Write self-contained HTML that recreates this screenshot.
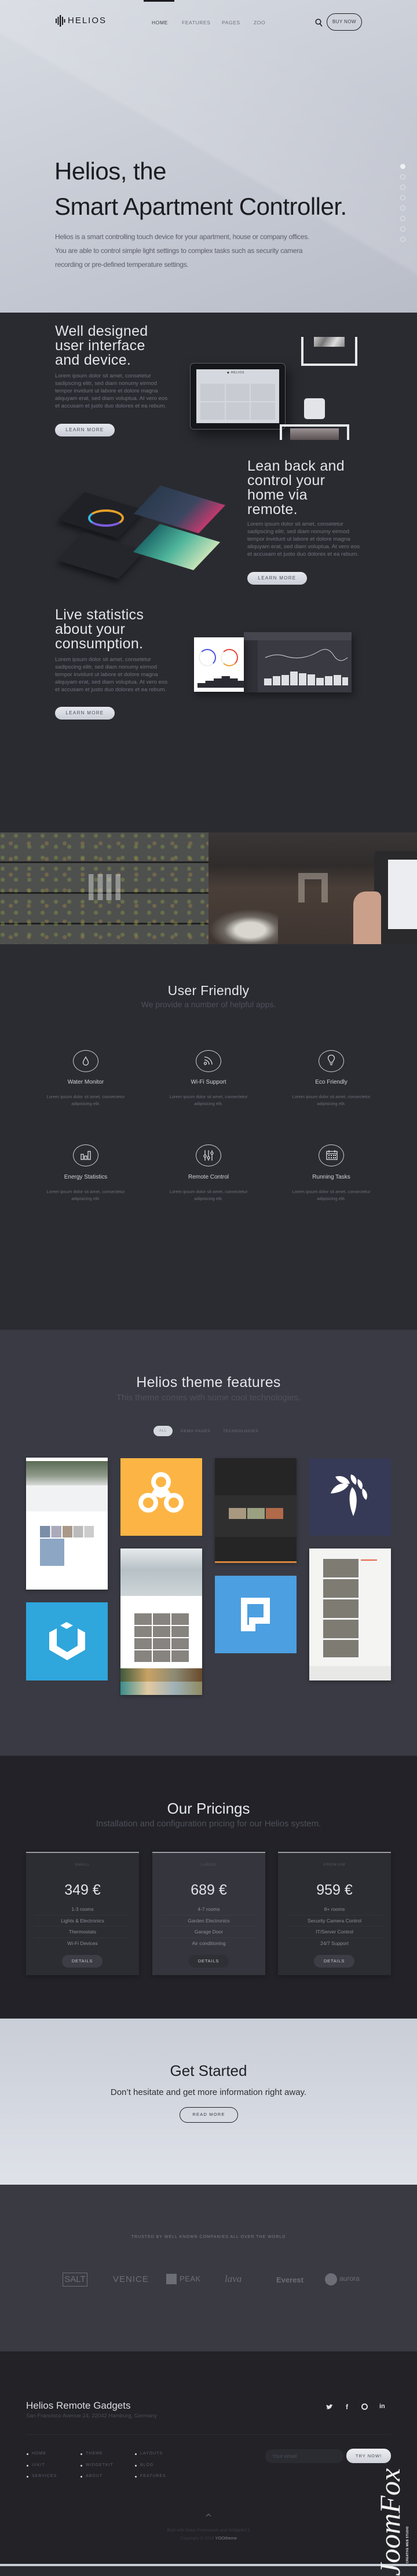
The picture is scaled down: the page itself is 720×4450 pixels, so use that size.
<!DOCTYPE html>
<html><head><meta charset="utf-8">
<style>
*{margin:0;padding:0;box-sizing:border-box}
body{width:720px;height:4433px;font-family:"Liberation Sans",sans-serif;background:#2a2b31;position:relative;overflow:hidden}
.a{position:absolute}
.c{text-align:center}
.t{font-weight:300}
.lm{position:absolute;width:103px;height:22px;border-radius:11px;background:linear-gradient(#e6e8ee,#c9cdd6);color:#4a4d57;font-size:8px;letter-spacing:1.3px;text-align:center;line-height:22px}
.h2{color:#e4e5ea;font-size:25px;line-height:25px;letter-spacing:.3px}
.p{color:#6f717b;font-size:9.6px;line-height:13px}
.ic{position:absolute;width:44px;height:38px;border:1.3px solid #cfd0d5;border-radius:50%}
.ft{position:absolute;width:200px;text-align:center;color:#d2d3d8;font-size:10px}
.fd{position:absolute;width:200px;text-align:center;color:#6a6c76;font-size:7.6px;line-height:11.5px}
.card{position:absolute;top:3199px;width:195px;height:213px;background:#2c2d33;border-top:2px solid #9a9ca4;box-shadow:0 2px 8px rgba(0,0,0,.3)}
.card .l{position:absolute;top:17px;width:100%;text-align:center;font-size:6.5px;letter-spacing:1px;color:#555761}
.card .pr{position:absolute;top:50px;width:100%;text-align:center;font-size:25px;color:#e2e3e8}
.card .r{position:absolute;left:16px;right:16px;height:19.5px;text-align:center;font-size:8.5px;color:#8a8c95;border-bottom:1px solid #34353b;line-height:19px}
.card .b{position:absolute;left:62px;top:176px;width:70px;height:22px;border-radius:11px;background:#3d3e45;color:#c9cad0;font-size:7.5px;letter-spacing:.8px;text-align:center;line-height:22px}
.fl{position:absolute;font-size:7px;letter-spacing:1px;color:#5b5d66}
.fl:before{content:"";position:absolute;left:-9px;top:3px;width:3px;height:3px;border-radius:50%;background:#d8d9de}
</style></head><body>

<!-- HERO -->
<div class="a" style="left:0;top:0;width:720px;height:540px;background:linear-gradient(160deg,#d7dbe2 0%,#c9cdd6 45%,#b9bdc8 100%)"></div>
<div class="a" style="left:0;top:0;width:720px;height:540px;background:linear-gradient(30deg,rgba(255,255,255,0) 50%,rgba(255,255,255,.12) 51%,rgba(255,255,255,0) 80%)"></div>
<div class="a" style="left:248px;top:0;width:53px;height:3px;background:#1b1c20"></div>
<svg class="a" style="left:96px;top:26px" width="17" height="20" viewBox="0 0 17 20"><g fill="#1b1c20"><rect x="0" y="6" width="2" height="8"/><rect x="3.5" y="3" width="2" height="14"/><rect x="7" y="0" width="2.4" height="20"/><rect x="11" y="3" width="2" height="14"/><rect x="14.5" y="7" width="2" height="6"/></g></svg>
<div class="a" style="left:117px;top:27px;font-size:15px;letter-spacing:2px;color:#1b1c20">HELIOS</div>
<div class="a" style="left:262px;top:34px;font-size:8.5px;letter-spacing:.6px;color:#3a3c44">HOME</div>
<div class="a" style="left:314px;top:34px;font-size:8.5px;letter-spacing:.6px;color:#6d707a">FEATURES</div>
<div class="a" style="left:383px;top:34px;font-size:8.5px;letter-spacing:.6px;color:#6d707a">PAGES</div>
<div class="a" style="left:438px;top:34px;font-size:8.5px;letter-spacing:.6px;color:#6d707a">ZOO</div>
<svg class="a" style="left:544px;top:32px" width="13" height="15" viewBox="0 0 13 15"><circle cx="5.5" cy="5.5" r="4.3" fill="none" stroke="#1b1c20" stroke-width="1.5"/><path d="M8.5 9l3.5 4.5" stroke="#1b1c20" stroke-width="1.6"/></svg>
<div class="a" style="left:564px;top:23px;width:61px;height:30px;border:1.5px solid #1b1c20;border-radius:15px;font-size:8px;color:#3a3c44;text-align:center;line-height:27px;letter-spacing:.4px">BUY NOW</div>
<div class="a t" style="left:94px;top:265px;font-size:42px;line-height:61px;color:#1c1d22;letter-spacing:-.5px">Helios, the<br>Smart Apartment Controller.</div>
<div class="a" style="left:95px;top:397px;width:460px;font-size:12px;line-height:24px;color:#5b5e68;letter-spacing:-.3px">Helios is a smart controlling touch device for your apartment, house or company offices. You are able to control simple light settings to complex tasks such as security camera recording or pre-defined temperature settings.</div>
<div class="a" style="left:691px;top:283px;width:9px;height:9px;border-radius:50%;background:#eef0f4"></div>
<div class="a" style="left:691px;top:301px">
<div style="width:9px;height:9px;border-radius:50%;border:1px solid #e2e5ea;margin-bottom:9px"></div><div style="width:9px;height:9px;border-radius:50%;border:1px solid #e2e5ea;margin-bottom:9px"></div><div style="width:9px;height:9px;border-radius:50%;border:1px solid #e2e5ea;margin-bottom:9px"></div><div style="width:9px;height:9px;border-radius:50%;border:1px solid #e2e5ea;margin-bottom:9px"></div><div style="width:9px;height:9px;border-radius:50%;border:1px solid #e2e5ea;margin-bottom:9px"></div><div style="width:9px;height:9px;border-radius:50%;border:1px solid #e2e5ea;margin-bottom:9px"></div><div style="width:9px;height:9px;border-radius:50%;border:1px solid #e2e5ea"></div></div>
<svg class="a" style="left:355px;top:634px" width="10" height="7" viewBox="0 0 10 7"><path d="M1 1l4 4 4-4" fill="none" stroke="#1b1c20" stroke-width="1.3"/></svg>

<!-- DARK FEATURES -->
<div class="a" style="left:0;top:540px;width:720px;height:898px;background:#2a2b31"></div>
<div class="a t h2" style="left:95px;top:560px">Well designed<br>user interface<br>and device.</div>
<div class="a p" style="left:95px;top:643px;width:200px">Lorem ipsum dolor sit amet, consetetur sadipscing elitr, sed diam nonumy eirmod tempor invidunt ut labore et dolore magna aliquyam erat, sed diam voluptua. At vero eos et accusam et justo duo dolores et ea rebum.</div>
<div class="lm" style="left:95px;top:732px">LEARN MORE</div>
<div class="a" style="left:328px;top:627px;width:165px;height:115px;border-radius:7px;background:#16171b;border:1px solid #5c5e66;box-shadow:6px 10px 20px rgba(0,0,0,.5)"></div>
<div class="a" style="left:339px;top:638px;width:143px;height:93px;background:#d5d8de"></div>
<div class="a" style="left:392px;top:641px;font-size:5px;letter-spacing:.8px;color:#333">◆ HELIOS</div>
<div class="a" style="left:346px;top:663px;width:129px;height:62px;display:grid;grid-template-columns:repeat(3,1fr);gap:2px">
<div style="background:#c8cbd2"></div><div style="background:#c8cbd2"></div><div style="background:#c8cbd2"></div><div style="background:#c8cbd2"></div><div style="background:#c8cbd2"></div><div style="background:#c8cbd2"></div></div>
<div class="a" style="left:520px;top:582px;width:97px;height:50px;border:4px solid #e8e9ec;border-top:none"></div>
<div class="a" style="left:542px;top:582px;width:53px;height:17px;background:linear-gradient(120deg,#ccc,#777,#ddd,#888)"></div>
<div class="a" style="left:525px;top:688px;width:36px;height:36px;border-radius:5px;background:#e3e4e8"></div>
<div class="a" style="left:483px;top:733px;width:120px;height:27px;border:4px solid #e8e9ec;border-bottom:none"></div>
<div class="a" style="left:501px;top:740px;width:84px;height:20px;background:linear-gradient(#9b9194,#5a5152)"></div>

<div class="a t h2" style="left:427px;top:793px">Lean back and<br>control your<br>home via<br>remote.</div>
<div class="a p" style="left:427px;top:899px;width:200px">Lorem ipsum dolor sit amet, consetetur sadipscing elitr, sed diam nonumy eirmod tempor invidunt ut labore et dolore magna aliquyam erat, sed diam voluptua. At vero eos et accusam et justo duo dolores et ea rebum.</div>
<div class="lm" style="left:427px;top:988px">LEARN MORE</div>
<div class="a" style="left:110px;top:865px;width:130px;height:50px;background:#202126;transform:skewX(-35deg) rotate(14deg);box-shadow:4px 6px 10px rgba(0,0,0,.5)"></div>
<div class="a" style="left:152px;top:880px;width:62px;height:30px;border-radius:50%;border:4px solid #e6a02a;border-left-color:#38b7e0;border-bottom-color:#7c5de0"></div>
<div class="a" style="left:240px;top:855px;width:140px;height:50px;background:linear-gradient(90deg,#2b3b4e,#3b4660 60%,#c03a6e);transform:skewX(-35deg) rotate(14deg)"></div>
<div class="a" style="left:110px;top:935px;width:130px;height:50px;background:#25262b;transform:skewX(-35deg) rotate(14deg);box-shadow:4px 6px 10px rgba(0,0,0,.5)"></div>
<div class="a" style="left:240px;top:920px;width:130px;height:50px;background:linear-gradient(90deg,#1f6b6b,#4fb59b,#c6e3b8);transform:skewX(-35deg) rotate(14deg)"></div>

<div class="a t h2" style="left:95px;top:1050px">Live statistics<br>about your<br>consumption.</div>
<div class="a p" style="left:95px;top:1133px;width:200px">Lorem ipsum dolor sit amet, consetetur sadipscing elitr, sed diam nonumy eirmod tempor invidunt ut labore et dolore magna aliquyam erat, sed diam voluptua. At vero eos et accusam et justo duo dolores et ea rebum.</div>
<div class="lm" style="left:95px;top:1221px">LEARN MORE</div>
<div class="a" style="left:421px;top:1092px;width:186px;height:104px;background:#393a42;box-shadow:4px 6px 12px rgba(0,0,0,.4)"></div>
<div class="a" style="left:421px;top:1092px;width:186px;height:14px;background:#45464e"></div>
<div class="a" style="left:421px;top:1106px;width:24px;height:90px;background:#303138"></div>
<svg class="a" style="left:456px;top:1120px" width="145" height="70" viewBox="0 0 145 70"><path d="M2 16 Q20 8 35 13 T65 16 T95 5 T120 12 T144 16" fill="none" stroke="#d9dade" stroke-width="1"/><g fill="#dfe0e4"><rect x="0" y="52" width="13" height="12"/><rect x="15" y="48" width="13" height="16"/><rect x="30" y="46" width="13" height="18"/><rect x="45" y="40" width="13" height="24"/><rect x="60" y="43" width="13" height="21"/><rect x="75" y="45" width="13" height="19"/><rect x="90" y="51" width="13" height="13"/><rect x="105" y="48" width="13" height="16"/><rect x="120" y="46" width="13" height="18"/><rect x="135" y="50" width="10" height="14"/></g></svg>
<div class="a" style="left:335px;top:1101px;width:86px;height:94px;background:#fff;box-shadow:4px 6px 12px rgba(0,0,0,.4)"></div>
<div class="a" style="left:343px;top:1121px;width:30px;height:30px;border-radius:50%;border:2px solid #eee;border-right-color:#4a55e0;border-top-color:#4a55e0"></div>
<div class="a" style="left:381px;top:1121px;width:30px;height:30px;border-radius:50%;border:2px solid #eee;border-right-color:#e5473a;border-top-color:#e5473a;border-bottom-color:#f0a03a"></div>
<div class="a" style="left:341px;top:1168px;width:80px;height:20px;background:#2b2c33;clip-path:polygon(0 60%,17% 60%,17% 40%,35% 40%,35% 20%,52% 20%,52% 0,70% 0,70% 20%,87% 20%,87% 40%,100% 40%,100% 100%,0 100%)"></div>

<!-- IMAGE ROW -->
<div class="a" style="left:0;top:1438px;width:360px;height:193px;background:repeating-linear-gradient(180deg,#4e504e 0 50px,#1f201f 50px 53px),#4e504e"></div>
<div class="a" style="left:0;top:1438px;width:360px;height:193px;background:radial-gradient(circle at 20% 30%,rgba(140,160,70,.45) 0 3px,transparent 4px) 0 0/23px 19px,radial-gradient(circle at 60% 70%,rgba(190,150,70,.35) 0 3px,transparent 4px) 0 0/31px 27px;opacity:.9"></div>
<div class="a" style="left:153px;top:1510px;width:58px;height:45px;background:linear-gradient(90deg,rgba(230,230,230,.45) 0 15%,transparent 15% 27%,rgba(230,230,230,.45) 27% 42%,transparent 42% 53%,rgba(230,230,230,.45) 53% 68%,transparent 68% 80%,rgba(230,230,230,.45) 80% 95%,transparent 95%)"></div>
<div class="a" style="left:360px;top:1438px;width:360px;height:193px;background:linear-gradient(180deg,#3a3636 0%,#302c2b 30%,#4a3f38 50%,#3e3430 100%)"></div>
<div class="a" style="left:360px;top:1570px;width:120px;height:61px;background:radial-gradient(ellipse at 60% 60%,#d9d6d0 0 25%,#6c6660 45%,transparent 70%)"></div>
<div class="a" style="left:515px;top:1508px;width:51px;height:51px;border:11px solid rgba(200,190,180,.45);border-bottom:none"></div>
<div class="a" style="left:646px;top:1470px;width:80px;height:161px;background:#2a2a2c;border-radius:8px"></div>
<div class="a" style="left:670px;top:1485px;width:50px;height:120px;background:#ecedf0"></div>
<div class="a" style="left:610px;top:1540px;width:48px;height:91px;background:#caa08a;border-radius:22px 10px 0 0"></div>

<!-- USER FRIENDLY -->
<div class="a" style="left:0;top:1631px;width:720px;height:666px;background:#2b2c32"></div>
<div class="a c t" style="left:0;top:1698px;width:720px;font-size:23px;color:#e4e5ea;letter-spacing:.3px">User Friendly</div>
<div class="a c" style="left:0;top:1727px;width:720px;font-size:14px;color:#4e505a">We provide a number of helpful apps.</div>
<div class="ic" style="left:126px;top:1814px"></div>
<div class="ic" style="left:338px;top:1814px"></div>
<div class="ic" style="left:550px;top:1814px"></div>
<div class="ic" style="left:126px;top:1977px"></div>
<div class="ic" style="left:338px;top:1977px"></div>
<div class="ic" style="left:550px;top:1977px"></div>
<svg class="a" style="left:142px;top:1823px" width="12" height="20" viewBox="0 0 12 20"><path d="M6 3 C4 7 1.5 9.5 1.5 12.5 A4.5 4.5 0 0 0 10.5 12.5 C10.5 9.5 8 7 6 3Z" fill="none" stroke="#dcdde1" stroke-width="1.3"/></svg>
<svg class="a" style="left:350px;top:1822px" width="20" height="20" viewBox="0 0 20 20"><g fill="none" stroke="#dcdde1" stroke-width="1.3"><circle cx="4.5" cy="15" r="2"/><path d="M3 9 A8 8 0 0 1 11 17"/><path d="M3 4 A13 13 0 0 1 16 17"/></g></svg>
<svg class="a" style="left:565px;top:1822px" width="14" height="20" viewBox="0 0 14 20"><g fill="none" stroke="#dcdde1" stroke-width="1.3"><path d="M4.5 13 C4.5 10 1.5 9 1.5 6 A5.5 5.5 0 0 1 12.5 6 C12.5 9 9.5 10 9.5 13Z"/><path d="M4.5 15.5h5M5.5 17.5h3"/></g></svg>
<svg class="a" style="left:139px;top:1987px" width="18" height="18" viewBox="0 0 18 18"><g fill="none" stroke="#dcdde1" stroke-width="1.3"><rect x="1" y="7" width="4" height="9"/><rect x="7" y="10" width="4" height="6"/><rect x="13" y="2" width="4" height="14"/></g></svg>
<svg class="a" style="left:351px;top:1986px" width="18" height="20" viewBox="0 0 18 20"><g fill="none" stroke="#dcdde1" stroke-width="1.3"><path d="M3 1v18M9 1v18M15 1v18"/><circle cx="3" cy="11" r="2" fill="#2b2c32"/><circle cx="9" cy="14" r="2" fill="#2b2c32"/><circle cx="15" cy="6" r="2" fill="#2b2c32"/></g></svg>
<svg class="a" style="left:563px;top:1986px" width="20" height="18" viewBox="0 0 20 18"><g fill="none" stroke="#dcdde1" stroke-width="1.3"><rect x="1" y="3" width="18" height="14"/><path d="M5 1v4M15 1v4M1 7h18"/></g><g fill="#dcdde1"><rect x="4" y="9" width="2" height="2"/><rect x="8" y="9" width="2" height="2"/><rect x="12" y="9" width="2" height="2"/><rect x="15" y="9" width="2" height="2"/><rect x="4" y="13" width="2" height="2"/><rect x="8" y="13" width="2" height="2"/><rect x="12" y="13" width="2" height="2"/><rect x="15" y="13" width="2" height="2"/></g></svg>
<div class="ft" style="left:48px;top:1864px">Water Monitor</div>
<div class="ft" style="left:260px;top:1864px">Wi-Fi Support</div>
<div class="ft" style="left:472px;top:1864px">Eco Friendly</div>
<div class="fd" style="left:48px;top:1889px">Lorem ipsum dolor sit amet, consectetur<br>adipisicing elit.</div>
<div class="fd" style="left:260px;top:1889px">Lorem ipsum dolor sit amet, consectetur<br>adipisicing elit.</div>
<div class="fd" style="left:472px;top:1889px">Lorem ipsum dolor sit amet, consectetur<br>adipisicing elit.</div>
<div class="ft" style="left:48px;top:2028px">Energy Statistics</div>
<div class="ft" style="left:260px;top:2028px">Remote Control</div>
<div class="ft" style="left:472px;top:2028px">Running Tasks</div>
<div class="fd" style="left:48px;top:2053px">Lorem ipsum dolor sit amet, consectetur<br>adipisicing elit.</div>
<div class="fd" style="left:260px;top:2053px">Lorem ipsum dolor sit amet, consectetur<br>adipisicing elit.</div>
<div class="fd" style="left:472px;top:2053px">Lorem ipsum dolor sit amet, consectetur<br>adipisicing elit.</div>

<!-- THEME FEATURES -->
<div class="a" style="left:0;top:2297px;width:720px;height:736px;background:#393a43"></div>
<div class="a c t" style="left:0;top:2374px;width:720px;font-size:25px;color:#e4e5ea;letter-spacing:.3px">Helios theme features</div>
<div class="a c" style="left:0;top:2406px;width:720px;font-size:15px;color:#4f515c">This theme comes with some cool technologies.</div>
<div class="a" style="left:265px;top:2463px;width:33px;height:18px;border-radius:9px;background:#d4d7de;color:#8b8e97;font-size:6.5px;text-align:center;line-height:18px;letter-spacing:.7px">ALL</div>
<div class="a" style="left:312px;top:2469px;font-size:6.5px;color:#6e707b;letter-spacing:.8px">DEMO PAGES</div>
<div class="a" style="left:385px;top:2469px;font-size:6.5px;color:#6e707b;letter-spacing:.8px">TECHNOLOGIES</div>
<div class="a" style="left:45px;top:2518px;width:141px;height:228px;background:#fff;box-shadow:0 2px 6px rgba(0,0,0,.3)"></div>
<div class="a" style="left:45px;top:2524px;width:141px;height:42px;background:linear-gradient(#5b6b55,#8f9a8a 60%,#d9dcd9)"></div>
<div class="a" style="left:45px;top:2566px;width:141px;height:45px;background:#f1f2f3"></div>
<div class="a" style="left:69px;top:2636px;width:93px;height:20px;background:linear-gradient(90deg,#7b8ea8 0 19%,#fff 19% 21%,#aab 21% 40%,#fff 40% 42%,#a98 42% 60%,#fff 60% 62%,#bbb 62% 80%,#fff 80% 82%,#ccc 82%)"></div>
<div class="a" style="left:69px;top:2658px;width:42px;height:47px;background:#8ca6c4"></div>
<div class="a" style="left:45px;top:2768px;width:141px;height:135px;background:#2fa6dc"></div>
<svg class="a" style="left:84px;top:2800px" width="64" height="70" viewBox="0 0 64 70"><path d="M31 2 L42 8 L31 14 L20 8Z" fill="#fff"/><path d="M50 13 L63 20 V50 L32 68 L1 50 V20 L14 13 V43 L32 54 L50 43Z" fill="#fff"/></svg>
<div class="a" style="left:208px;top:2519px;width:141px;height:134px;background:#fcb544"></div>
<svg class="a" style="left:238px;top:2542px" width="80" height="72" viewBox="0 0 80 72"><g fill="#fff"><circle cx="40" cy="18" r="17"/><circle cx="18" cy="54" r="17"/><circle cx="62" cy="54" r="17"/><path d="M30 28 L22 40 L40 46 L58 40 L50 28Z"/></g><g fill="#fcb544"><circle cx="40" cy="18" r="9"/><circle cx="18" cy="54" r="9"/><circle cx="62" cy="54" r="9"/></g></svg>
<div class="a" style="left:208px;top:2675px;width:141px;height:253px;background:#fff;box-shadow:0 2px 6px rgba(0,0,0,.3)"></div>
<div class="a" style="left:208px;top:2675px;width:141px;height:82px;background:linear-gradient(#e6eaec,#b7c1c6 45%,#cdd5d8)"></div>
<div class="a" style="left:232px;top:2787px;width:94px;height:84px;background:repeating-linear-gradient(90deg,#6a6560 0 30px,#fff 30px 32px),#666;opacity:.8"></div>
<div class="a" style="left:232px;top:2807px;width:94px;height:2px;background:#fff"></div>
<div class="a" style="left:232px;top:2828px;width:94px;height:2px;background:#fff"></div>
<div class="a" style="left:232px;top:2849px;width:94px;height:2px;background:#fff"></div>
<div class="a" style="left:208px;top:2882px;width:141px;height:46px;background:linear-gradient(90deg,#3f5a3c,#c9a264,#8c8a74,#6a4a2a);"></div>
<div class="a" style="left:208px;top:2905px;width:141px;height:23px;background:linear-gradient(90deg,#3a8c8c,#e2c9a0,#9fb1b8,#8e8a60)"></div>
<div class="a" style="left:371px;top:2519px;width:141px;height:181px;background:#252526;box-shadow:0 2px 6px rgba(0,0,0,.3)"></div>
<div class="a" style="left:371px;top:2583px;width:141px;height:72px;background:#2f2f30"></div>
<div class="a" style="left:395px;top:2605px;width:94px;height:19px;background:linear-gradient(90deg,#a89880 0 32%,#333 32% 34%,#9aa080 34% 66%,#333 66% 68%,#b06a4a 68%)"></div>
<div class="a" style="left:371px;top:2697px;width:141px;height:3px;background:#d8873a"></div>
<div class="a" style="left:371px;top:2722px;width:141px;height:134px;background:#4c9fe0"></div>
<svg class="a" style="left:416px;top:2760px" width="52" height="60" viewBox="0 0 52 60"><path d="M0 0H50V45H25V58H0Z M11 11V47H14V34H39V11Z" fill="#fff" fill-rule="evenodd"/></svg>
<div class="a" style="left:534px;top:2519px;width:141px;height:134px;background:#373a56"></div>
<svg class="a" style="left:566px;top:2543px" width="78" height="80" viewBox="0 0 78 80"><g fill="#fff"><path d="M5 37 C10 22 25 16 36 22 C30 32 18 36 5 37Z"/><path d="M13 8 C26 4 36 12 38 20 C28 22 18 18 13 8Z"/><path d="M40 4 C48 6 52 14 48 22 C42 18 38 12 40 4Z"/><path d="M52 12 C60 16 62 24 58 30 C52 26 50 18 52 12Z"/><path d="M60 28 C68 32 70 42 66 48 C60 44 58 34 60 28Z"/><path d="M42 26 C52 34 52 58 44 76 C38 62 34 40 42 26Z"/></g></svg>
<div class="a" style="left:534px;top:2675px;width:141px;height:228px;background:#f4f4f3;box-shadow:0 2px 6px rgba(0,0,0,.3)"></div>
<div class="a" style="left:558px;top:2693px;width:61px;height:170px;background:repeating-linear-gradient(180deg,#7e7b73 0 32px,#f4f4f3 32px 35px)"></div>
<div class="a" style="left:534px;top:2878px;width:141px;height:25px;background:#e8e8e7"></div>
<div class="a" style="left:623px;top:2694px;width:28px;height:2px;background:#e3653d"></div>

<!-- PRICING -->
<div class="a" style="left:0;top:3033px;width:720px;height:454px;background:#222228"></div>
<div class="a c t" style="left:0;top:3109px;width:720px;font-size:26px;color:#e6e7ec">Our Pricings</div>
<div class="a c" style="left:0;top:3142px;width:720px;font-size:15px;color:#4e505a">Installation and configuration pricing for our Helios system.</div>
<div class="card" style="left:45px"><div class="l">SMALL</div><div class="pr t">349 €</div>
<div class="r" style="top:88px">1-3 rooms</div><div class="r" style="top:107.5px">Lights &amp; Electronics</div><div class="r" style="top:127px">Thermostats</div><div class="r" style="top:146.5px;border:none">Wi-Fi Devices</div><div class="b">DETAILS</div></div>
<div class="card" style="left:263px;background:#35363d"><div class="l">LARGE</div><div class="pr t">689 €</div>
<div class="r" style="top:88px;border-color:#3d3e45">4-7 rooms</div><div class="r" style="top:107.5px;border-color:#3d3e45">Garden Electronics</div><div class="r" style="top:127px;border-color:#3d3e45">Garage Door</div><div class="r" style="top:146.5px;border:none">Air conditioning</div><div class="b" style="background:#2f3036">DETAILS</div></div>
<div class="card" style="left:480px"><div class="l">PREMIUM</div><div class="pr t">959 €</div>
<div class="r" style="top:88px">8+ rooms</div><div class="r" style="top:107.5px">Security Camera Control</div><div class="r" style="top:127px">IT/Server Control</div><div class="r" style="top:146.5px;border:none">24/7 Support</div><div class="b">DETAILS</div></div>

<!-- GET STARTED -->
<div class="a" style="left:0;top:3487px;width:720px;height:287px;background:linear-gradient(#c9ced7,#d3d7df 50%,#dfe2e9)"></div>
<div class="a c t" style="left:0;top:3562px;width:720px;font-size:26px;color:#1f2025">Get Started</div>
<div class="a c" style="left:0;top:3606px;width:720px;font-size:15px;color:#2e3036">Don’t hesitate and get more information right away.</div>
<div class="a" style="left:310px;top:3640px;width:101px;height:27px;border:1.4px solid #1f2025;border-radius:14px;text-align:center;line-height:24px;font-size:7.5px;letter-spacing:1.2px;color:#3b3d44">READ MORE</div>

<!-- TRUSTED -->
<div class="a" style="left:0;top:3774px;width:720px;height:288px;background:#393a42"></div>
<div class="a c" style="left:0;top:3861px;width:720px;font-size:7px;letter-spacing:1px;color:#7c7e88">TRUSTED BY WELL KNOWN COMPANIES ALL OVER THE WORLD</div>
<div class="a" style="left:108px;top:3926px;width:43px;height:24px;border:1.3px solid #6c6e77;color:#6c6e77;font-size:15px;text-align:center;line-height:22px">SALT</div>
<div class="a" style="left:195px;top:3929px;font-size:15px;color:#6c6e77;letter-spacing:1px">VENICE</div>
<div class="a" style="left:287px;top:3928px;width:18px;height:18px;background:#6c6e77"></div>
<div class="a" style="left:310px;top:3929px;font-size:13px;color:#6c6e77;letter-spacing:.5px">PEAK</div>
<div class="a" style="left:388px;top:3927px;font-size:17px;color:#6c6e77;font-style:italic;font-family:'Liberation Serif',serif">lava</div>
<div class="a" style="left:477px;top:3931px;font-size:13px;font-weight:bold;color:#6c6e77">Everest</div>
<div class="a" style="left:561px;top:3927px;width:21px;height:21px;border-radius:50%;background:#6c6e77"></div>
<div class="a" style="left:586px;top:3929px;font-size:12px;color:#6c6e77">aurora</div>

<!-- FOOTER -->
<div class="a" style="left:0;top:4062px;width:720px;height:367px;background:#222227"></div>
<div class="a" style="left:0;top:4429px;width:720px;height:4px;background:#c8ccd4"></div>
<div class="a" style="left:45px;top:4146px;font-size:17px;color:#dcdde2">Helios Remote Gadgets</div>
<div class="a" style="left:45px;top:4168px;font-size:9.5px;color:#4b4d57">San Francisco Avenue 24, 22042 Hamburg, Germany</div>
<svg class="a" style="left:563px;top:4153px" width="12" height="10" viewBox="0 0 12 10"><path d="M0 8 C4 10 9 8 10 3 L12 1 L10 1.5 C9 0 6 0 6 3 C4 3 2 2 1 1 C0 3 1 4 2 5 L1 5 C1 6 2 7 3 7 C2 8 1 8 0 8Z" fill="#e0e1e5"/></svg>
<div class="a" style="left:597px;top:4151px;font-size:12px;font-weight:bold;color:#e0e1e5">f</div>
<div class="a" style="left:624px;top:4152px;width:11px;height:11px;border-radius:50%;border:2px solid #e0e1e5"></div>
<div class="a" style="left:655px;top:4151px;font-size:11px;font-weight:bold;color:#e0e1e5">in</div>
<div class="a" style="left:45px;top:4205px;width:630px;height:1px;background:#2c2d33"></div>
<div class="fl" style="left:55px;top:4235px">HOME</div>
<div class="fl" style="left:55px;top:4255px">UIKIT</div>
<div class="fl" style="left:55px;top:4274px">SERVICES</div>
<div class="fl" style="left:148px;top:4235px">THEME</div>
<div class="fl" style="left:148px;top:4255px">WIDGETKIT</div>
<div class="fl" style="left:148px;top:4274px">ABOUT</div>
<div class="fl" style="left:242px;top:4235px">LAYOUTS</div>
<div class="fl" style="left:242px;top:4255px">BLOG</div>
<div class="fl" style="left:242px;top:4274px">FEATURES</div>
<div class="a" style="left:458px;top:4231px;width:135px;height:24px;border-radius:12px;background:#2b2c32;color:#4a4c55;font-size:9px;line-height:24px;padding-left:12px">Your email</div>
<div class="a" style="left:598px;top:4230px;width:77px;height:25px;border-radius:12px;background:linear-gradient(#eceef2,#cfd2d9);color:#4a4c55;font-size:7.5px;line-height:25px;text-align:center;letter-spacing:1px">TRY NOW!</div>
<svg class="a" style="left:355px;top:4341px" width="10" height="7" viewBox="0 0 10 7"><path d="M1 6l4-4 4 4" fill="none" stroke="#6c6e77" stroke-width="1.2"/></svg>
<div class="a c" style="left:0;top:4364px;width:720px;font-size:7.5px;color:#3b3d45;line-height:14px">Built with Warp Framework and Widgetkit 2<br>Copyright © 2015 <span style="color:#7d7f88">YOOtheme</span></div>
<div class="a" style="left:648px;top:4450px;font-size:50px;line-height:50px;color:#f2f2f2;font-family:'Liberation Serif',serif;font-style:italic;transform:rotate(-90deg);transform-origin:0 0;white-space:nowrap">JoomFox</div>
<div class="a" style="left:701px;top:4428px;font-size:5px;font-weight:bold;color:#f2f2f2;transform:rotate(-90deg);transform-origin:0 0;white-space:nowrap;letter-spacing:.3px">CREATIVE WEB STUDIO</div>
</body></html>
